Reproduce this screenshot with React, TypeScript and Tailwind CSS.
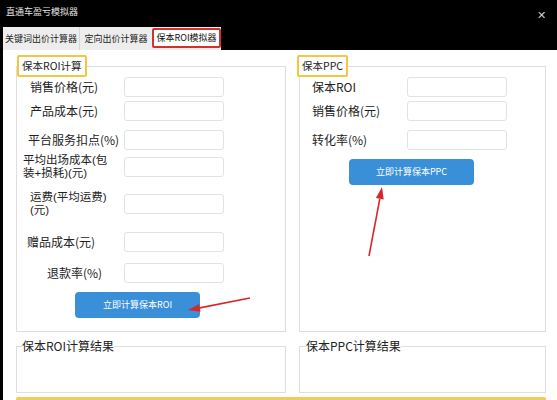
import React from "react";

const leftRows = [
  { label: ["销售价格(元)"], h: "h-[20px]", pl: "pl-[13px]" },
  { label: ["产品成本(元)"], h: "h-[28px]", pl: "pl-[13px]" },
  { label: ["平台服务扣点(%)"], h: "h-[29px]", pl: "pl-[11px]" },
  { label: ["平均出场成本(包", "装+损耗)(元)"], h: "h-[26px]", pl: "pl-[6px]" },
  { label: ["运费(平均运费)", "(元)"], h: "h-[47px]", pl: "pl-[13px]" },
  { label: ["赠品成本(元)"], h: "h-[29px]", pl: "pl-[10px]" },
  { label: ["退款率(%)"], h: "h-[34px]", pl: "pl-[30px]" },
];

const rightRows = [
  { label: ["保本ROI"], h: "h-[20px]" },
  { label: ["销售价格(元)"], h: "h-[28px]" },
  { label: ["转化率(%)"], h: "h-[29px]" },
];

function Field() {
  return <div className="w-[100px] h-[20px] rounded-[3px] border border-[#e2e2e2] bg-white" />;
}

function Label({ lines, className }: { lines: string[]; className: string }) {
  // two-line labels use a tighter line box so the lines sit close like the original
  const multi = lines.length > 1;
  return (
    <div
      className={`w-[107px] shrink-0 text-[#222] ${className} ${
        multi
          ? "text-[11.5px] leading-[13px] font-['Liberation_Sans','Noto_Sans_CJK_SC',sans-serif]"
          : "text-[12px] leading-[14px]"
      }`}
    >
      {lines.map((l, i) => (
        <div key={i} className="whitespace-nowrap">{l}</div>
      ))}
    </div>
  );
}

export default function App() {
  return (
    <div className="relative w-[557px] h-[400px] overflow-hidden bg-black flex flex-col font-['Noto_Sans_CJK_SC','Liberation_Sans',sans-serif]">
      {/* title bar */}
      <div className="h-[27px] shrink-0 flex items-center justify-between pl-[6px] pr-[11px]">
        <span className="text-[9px] leading-[10px] text-[#e6e6e6] pb-[3px]">直通车盈亏模拟器</span>
        <span className="text-[11px] leading-[12px] text-[#cfcfcf]">✕</span>
      </div>

      {/* tabs */}
      <div className="h-[23px] shrink-0 flex pl-[3px]">
        <div className="w-[77px] bg-[#ededed] flex items-center justify-center text-[9px] text-[#222] border-r border-[#d6d6d6]">
          关键词出价计算器
        </div>
        <div className="w-[72px] bg-[#ededed] flex items-center justify-center text-[9px] text-[#222]">
          定向出价计算器
        </div>
        <div className="w-[69px] bg-[#ededed] flex items-start">
          <div className="mt-px h-[20px] w-full bg-white border-2 border-[#d3302e] rounded-[2px] flex items-center justify-center text-[9px] text-[#111]">
            保本ROI模拟器
          </div>
        </div>
      </div>

      {/* content */}
      <div className="flex-1 ml-[3px] bg-white pl-[13px] pr-[11px] pt-[5px] flex flex-col">
        <div className="flex gap-[13px]">
          <fieldset className="w-[270px] h-[277px] border border-[#dedede]">
            <legend className="h-[22px] px-[3px] border-2 border-[#f3c744] rounded-[2px] text-[10.5px] leading-[18px] text-[#222]">
              保本ROI计算
            </legend>
            <div className="flex flex-col">
              {leftRows.map((r, i) => (
                <div key={i} className={`flex items-center ${r.h}`}>
                  <Label lines={r.label} className={r.pl} />
                  <Field />
                </div>
              ))}
              <button className="mt-[2px] ml-[58px] w-[125px] h-[26px] rounded-[4px] bg-[#3a8fd9] text-white text-[9px]">
                立即计算保本ROI
              </button>
            </div>
          </fieldset>

          <fieldset className="w-[247px] h-[277px] border border-[#dedede]">
            <legend className="-ml-[3px] h-[22px] px-[3px] border-2 border-[#f3c744] rounded-[2px] text-[10.5px] leading-[18px] text-[#222]">
              保本PPC
            </legend>
            <div className="flex flex-col">
              {rightRows.map((r, i) => (
                <div key={i} className={`flex items-center ${r.h}`}>
                  <Label lines={r.label} className="pl-[12px]" />
                  <Field />
                </div>
              ))}
              <button className="mt-[5px] ml-[49px] w-[125px] h-[26px] rounded-[4px] bg-[#3a8fd9] text-white text-[9px]">
                立即计算保本PPC
              </button>
            </div>
          </fieldset>
        </div>

        <div className="flex gap-[13px] mt-[7px]">
          <fieldset className="w-[270px] h-[54px] border border-[#dedede]">
            <legend className="ml-[5px] text-[12px] leading-[14px] text-[#222]">保本ROI计算结果</legend>
          </fieldset>
          <fieldset className="w-[247px] h-[54px] border border-[#dedede]">
            <legend className="ml-[6px] text-[12px] leading-[14px] text-[#222]">保本PPC计算结果</legend>
          </fieldset>
        </div>

        <div className="mt-[4px] w-[530px] border-t-[3px] border-[#f1cd55] rounded-t-[2px]" />
      </div>

      {/* red annotation arrows */}
      <svg className="absolute inset-0 pointer-events-none" width="557" height="400" viewBox="0 0 557 400">
        <line x1="250" y1="298" x2="199.8" y2="307.9" stroke="#d9262b" strokeWidth="1.6" />
        <polygon points="188,310 200.5,311.8 199.1,304" fill="#d9262b" />
        <line x1="369" y1="256" x2="379.8" y2="198.8" stroke="#d9262b" strokeWidth="1.6" />
        <polygon points="382,187 383.7,199.5 375.9,198.1" fill="#d9262b" />
      </svg>
    </div>
  );
}
